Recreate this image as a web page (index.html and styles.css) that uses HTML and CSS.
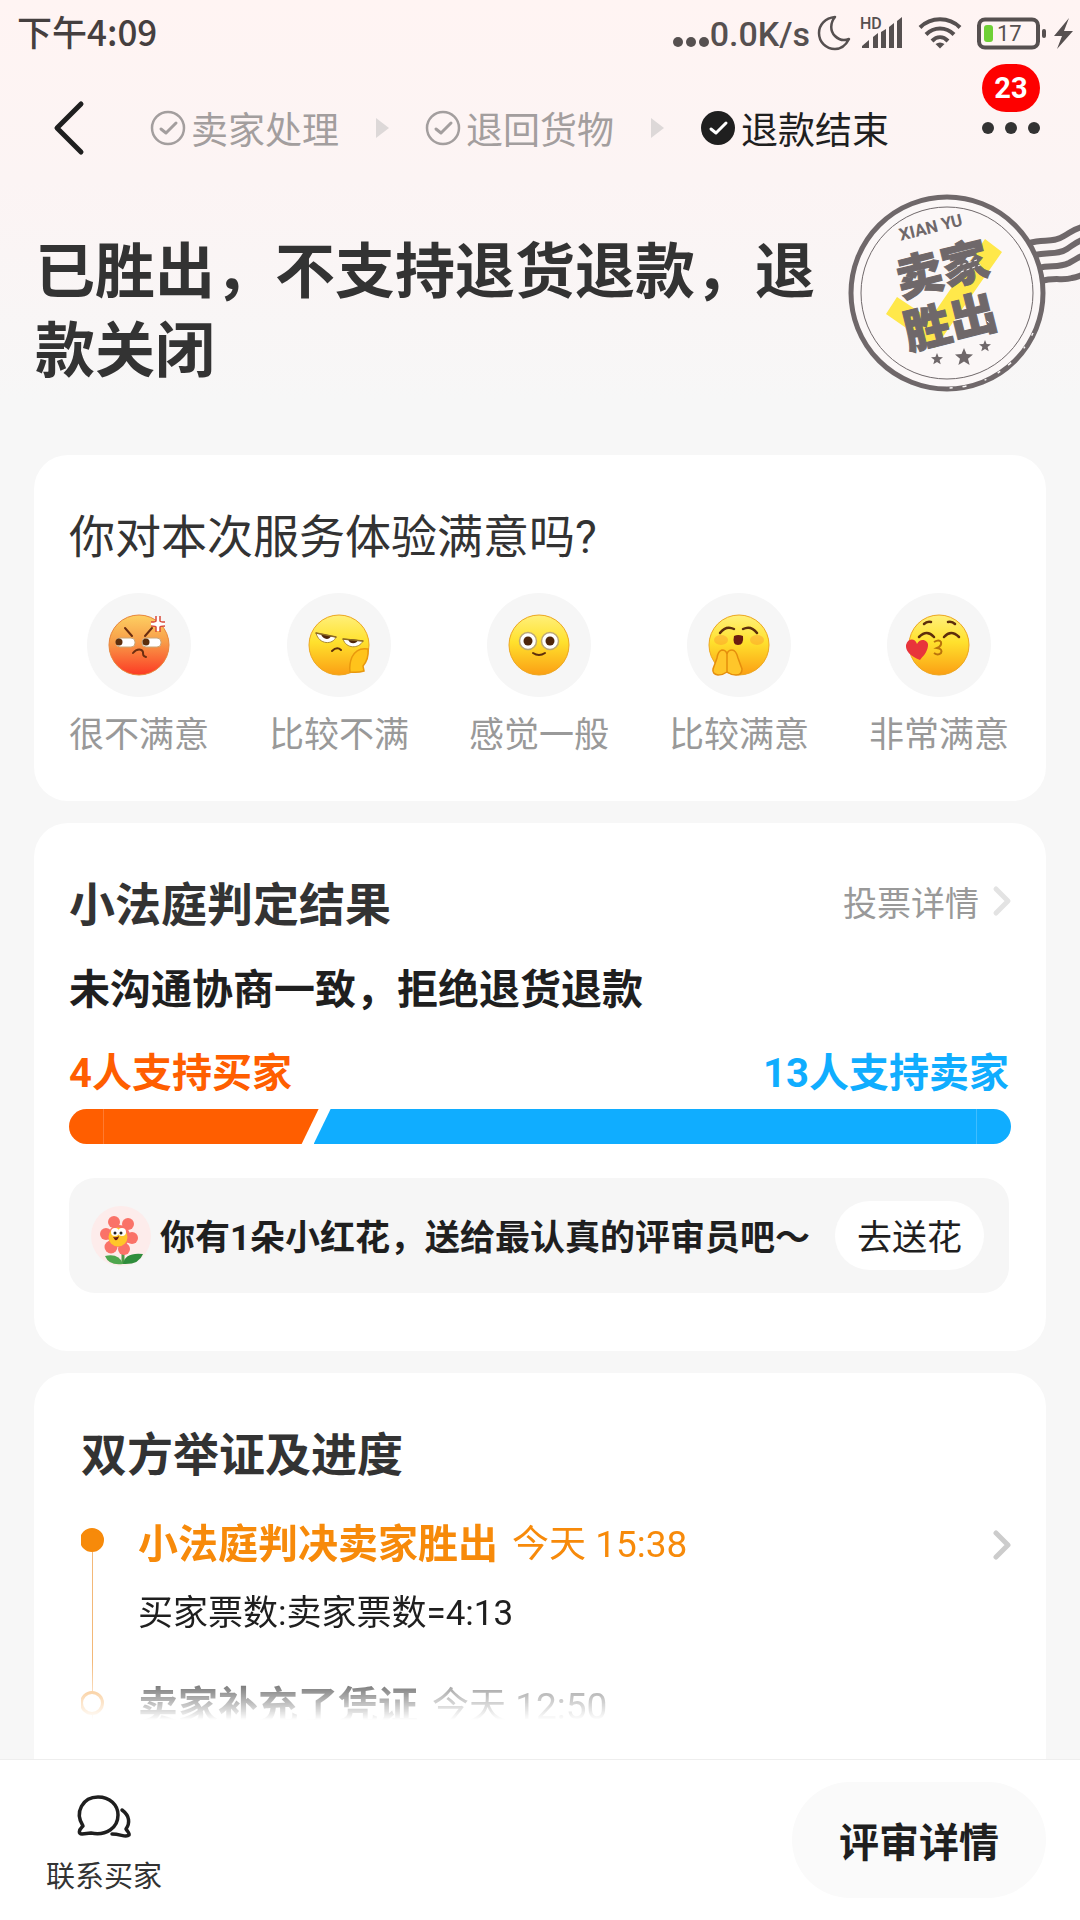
FILE: index.html
```html
<!DOCTYPE html>
<html lang="zh-CN">
<head>
  <meta charset="UTF-8" />
  <meta name="viewport" content="width=device-width, initial-scale=1.0" />
  <title>退款结束</title>
  <link rel="stylesheet" href="styles.css">
</head>
<body>
  <!-- 状态栏 -->
  <div class="status-bar">
    <span class="clock">下午4:09</span>
    <div class="status-icons">
      <svg width="36" height="36" viewBox="0 0 36 36" fill="#565050"><circle cx="5" cy="27" r="5"/><circle cx="18" cy="27" r="5"/><circle cx="31" cy="27" r="5"/></svg>
      <span class="speed">0.0K/s</span>
      <svg class="moon" width="34" height="36" viewBox="0 0 34 36" fill="none" stroke="#565050" stroke-width="2.5" stroke-linejoin="round"><path d="M18 2C8 3 2 10 2 18c0 9 7 16 16 16 6 0 11-4 14-10-5 2-10 1-14-3-5-5-5-13 0-19z"/></svg>
      <svg class="signal" width="44" height="36" viewBox="0 0 44 36">
        <text class="hd" x="0" y="14">HD</text>
        <g fill="#565050"><path d="M2 33v-2l7-6v8zM13 33V22l5-4v15zM21 33V17l5-3v19zM29 33V12l5-4v25zM37 33V6l5-4v31z"/></g>
      </svg>
      <svg class="wifi" width="42" height="34" viewBox="0 0 42 34" fill="none" stroke="#565050" stroke-width="4"><path d="M1 11.500C12 .6 30 .6 41 11.500M7 18.500c8-8 20-8 28 0M13 25c5-5 11-5 16 0"/><path d="M16.500 28q4.500-3 9 0L21 32.500z" fill="#565050" stroke="none"/></svg>
      <svg class="battery" width="97" height="34" viewBox="0 0 97 34">
        <rect x="2" y="3.500" width="59" height="28" rx="6" fill="none" stroke="#565050" stroke-width="4"/>
        <rect x="7" y="9" width="9" height="17" rx="3" fill="#6fd036"/>
        <rect x="65" y="13" width="4" height="9" rx="2" fill="#565050"/>
        <text class="level" x="20" y="25">17</text>
        <path d="M92 2L77 20h8l-5 13 16-18h-9z" fill="#565050"/>
      </svg>
    </div>
  </div>

  <!-- 顶部导航 -->
  <header class="nav">
    <button class="back" aria-label="返回">
      <svg width="32" height="56" viewBox="0 0 32 56" fill="none" stroke="#1f1f1f" stroke-width="5" stroke-linecap="round" stroke-linejoin="round"><path d="M28 4L4 28l24 24"/></svg>
    </button>
    <ol class="steps">
      <li class="step">
        <svg width="36" height="36" viewBox="0 0 36 36" fill="none" stroke="#a39e9e"><circle cx="18" cy="18" r="16" stroke-width="2.500"/><path d="M11 19l5 4 10-10" stroke-width="3" stroke-linecap="round" stroke-linejoin="round"/></svg>
        <span>卖家处理</span>
      </li>
      <li class="arrow"></li>
      <li class="step">
        <svg width="36" height="36" viewBox="0 0 36 36" fill="none" stroke="#a39e9e"><circle cx="18" cy="18" r="16" stroke-width="2.500"/><path d="M11 19l5 4 10-10" stroke-width="3" stroke-linecap="round" stroke-linejoin="round"/></svg>
        <span>退回货物</span>
      </li>
      <li class="arrow"></li>
      <li class="step current">
        <svg width="36" height="36" viewBox="0 0 36 36" fill="none"><circle cx="18" cy="18" r="17" fill="#1f1f1f"/><path d="M11 19l5 4 10-10" stroke="#fff" stroke-width="3" stroke-linecap="round" stroke-linejoin="round"/></svg>
        <span>退款结束</span>
      </li>
    </ol>
    <button class="more" aria-label="更多">
      <svg width="60" height="14" viewBox="0 0 60 14" fill="#333"><circle cx="7" cy="7" r="6"/><circle cx="30" cy="7" r="6"/><circle cx="53" cy="7" r="6"/></svg>
      <span class="badge">23</span>
    </button>
  </header>

  <!-- 结果标题 + 印章 -->
  <section class="hero">
    <h1>已胜出，不支持退货退款，退款关闭</h1>
    <svg class="stamp" width="235" height="208" viewBox="0 0 235 208">
      <g fill="none" stroke="#6f686a">
        <g stroke-width="6">
          <path d="M184 53c16-4 24 0 35-7 7-4 10-7 18-9"/>
          <path d="M189 65c16-3 24 0 33-6 6-4 8-6 15-9"/>
          <path d="M193 78c14-3 20 0 31-5 6-3 8-5 13-7"/>
          <path d="M196 91c14-4 22 0 31-3 5-1 7-2 10-3"/>
        </g>
        <circle class="stamp-bg" cx="102" cy="103" r="96" stroke-width="5"/>
        <circle cx="102" cy="103" r="86" stroke-width="1"/>
      </g>
      <path d="M52 107L41 124l49 34 67-96-17-13-55 80z" fill="#ffe84a"/>
      <g class="stamp-text">
        <text class="pinyin" x="87" y="43" transform="rotate(-14 87 43)">XIAN YU</text>
        <g transform="rotate(-14 102 103)">
          <text x="103" y="96">卖家</text>
          <text x="98" y="149">胜出</text>
        </g>
      </g>
      <g fill="#6f686a">
        <path d="M119 158l2.500 6 6.500.5-5 4.200 1.600 6.300-5.600-3.400-5.600 3.400 1.600-6.300-5-4.200 6.500-.5z"/>
        <path d="M92 163l1.600 4 4.400.3-3.400 2.800 1.100 4.200-3.700-2.300-3.700 2.300 1.100-4.200-3.400-2.800 4.400-.3z"/>
        <path d="M140 150l1.600 4 4.400.3-3.400 2.800 1.100 4.200-3.700-2.300-3.700 2.300 1.100-4.200-3.400-2.800 4.400-.3z"/>
      </g>
      <!-- 磨损痕迹 -->
      <g fill="none" stroke="#f8f5f5">
        <path d="M188 143c-14 29-44 54-84 55" stroke-width="1.500" stroke-dasharray="3 13 2 19 4 10"/>
        <path d="M112 76l20-6m-16 12l22-8m-6 50l14 10" stroke-width="1" stroke-dasharray="3 3"/>
      </g>
    </svg>
  </section>

  <main class="cards">
    <!-- 满意度 -->
    <section class="card">
      <h2 class="card-title light">你对本次服务体验满意吗?</h2>
      <div class="rates">
        <button class="rate">
          <span class="face">
            <svg width="62" height="62" viewBox="0 0 62 62">
              <defs><linearGradient id="red" x1="0" y1="0" x2="0" y2="1"><stop offset="0" stop-color="#fdd062"/><stop offset=".45" stop-color="#f89c48"/><stop offset="1" stop-color="#fc3a24"/></linearGradient></defs>
              <circle cx="31" cy="31" r="30" fill="url(#red)" stroke="#e8853a"/>
              <rect x="8" y="24" width="19" height="9" rx="4" fill="#fff" stroke="#c9a679"/>
              <rect x="34" y="24" width="19" height="9" rx="4" fill="#fff" stroke="#c9a679"/>
              <g fill="#5d2e0c"><circle cx="11" cy="28" r="3.500"/><circle cx="38" cy="28" r="3.500"/></g>
              <path d="M17 14l7 8M44 14l-7 8M25 39c4-5 9-4 10-1 0 3 0 4 3 5" fill="none" stroke="#6b2d10" stroke-width="2" stroke-linecap="round"/>
              <path d="M50 3v14M43 10h14" fill="none" stroke="#fff" stroke-width="4"/>
              <path d="M48 2v5q0 1-5 1M52 2v5q0 1 5 1M48 18v-5q0-1-5-1M52 18v-5q0-1 5-1" fill="none" stroke="#d9493a" stroke-width="1.500"/>
            </svg>
          </span>
          <span>很不满意</span>
        </button>
        <button class="rate">
          <span class="face">
            <svg width="62" height="62" viewBox="0 0 62 62">
              <defs><linearGradient id="yellow" x1="0" y1="0" x2="0" y2="1"><stop offset="0" stop-color="#fff07a"/><stop offset=".45" stop-color="#ffe12d"/><stop offset="1" stop-color="#fb9f14"/></linearGradient></defs>
              <circle cx="31" cy="31" r="30" fill="url(#yellow)" stroke="#eda61f"/>
              <path d="M8 19l20 4c-3 8-17 8-20-4zM35 25l20 2c-4 8-17 8-20-2z" fill="#fff" stroke="#ab8a32"/>
              <path d="M13 20l10 2c-2 5-9 3-10-2zM40 25l10 1c-2 5-9 4-10-1z" fill="#4f260a"/>
              <path d="M8 19l20 4M35 25l20 2" fill="none" stroke="#8d6a22" stroke-width="1.500" stroke-linecap="round"/>
              <path d="M24 37q5-5 9-1" fill="none" stroke="#5d2e0c" stroke-width="2" stroke-linecap="round"/>
              <path d="M60 35q-11-2-16 8-3 7-2 15 8 1 14-1l-1-5q6-7 5-17z" fill="#ffc31b" stroke="#e9980d" stroke-width="1.500"/>
            </svg>
          </span>
          <span>比较不满</span>
        </button>
        <button class="rate">
          <span class="face">
            <svg width="62" height="62" viewBox="0 0 62 62">
              <circle cx="31" cy="31" r="30" fill="url(#yellow)" stroke="#eda61f"/>
              <g fill="#fff" stroke="#bda873" stroke-width="1.500"><circle cx="20" cy="27" r="8.500"/><circle cx="42" cy="27" r="8.500"/></g>
              <g fill="#4f260a"><circle cx="20" cy="27" r="4.500"/><circle cx="42" cy="27" r="4.500"/></g>
              <path d="M25 39q6 4 12 0" fill="none" stroke="#5d2e0c" stroke-width="2" stroke-linecap="round"/>
            </svg>
          </span>
          <span>感觉一般</span>
        </button>
        <button class="rate">
          <span class="face">
            <svg width="62" height="62" viewBox="0 0 62 62">
              <circle cx="31" cy="31" r="30" fill="url(#yellow)" stroke="#eda61f"/>
              <g fill="#f9762f" opacity=".3"><ellipse cx="13" cy="26" rx="7" ry="5"/><ellipse cx="49" cy="26" rx="7" ry="5"/></g>
              <path d="M12 19q6-8 14-4M35 15q8-4 14 4" fill="none" stroke="#5d2e0c" stroke-width="2.500" stroke-linecap="round"/>
              <path d="M26 22q4-2 9 0 1 9-5 9t-4-9z" fill="#6b1d10"/>
              <path d="M19 40q-1-4-5-4-4 1-5 8L5 55q-1 5 5 6 5 0 9-3zM19 40q1-4 5-4 4 0 6 8l4 11q0 6-6 6-5 0-9-3z" fill="#ffc62a" stroke="#e58e0d" stroke-width="1.500"/>
            </svg>
          </span>
          <span>比较满意</span>
        </button>
        <button class="rate">
          <span class="face">
            <svg width="68" height="62" viewBox="-3 0 68 62">
              <circle cx="31" cy="31" r="30" fill="url(#yellow)" stroke="#eda61f"/>
              <path d="M11 23q8-8 15 0M36 23q7-8 15 0M16 10q3-3 7-2M40 8q4-1 7 2" fill="none" stroke="#5d2e0c" stroke-width="2.500" stroke-linecap="round"/>
              <path d="M26 28q5-3 7 0 1 4-4 6 6 1 4 5-3 3-7 0" fill="none" stroke="#b9730c" stroke-width="2"/>
              <path d="M12 46Q-3 40-2 31c2-7 9-7 11-1 3-7 12-4 11 2-1 7-5 10-8 14z" fill="#e8343b"/>
            </svg>
          </span>
          <span>非常满意</span>
        </button>
      </div>
    </section>

    <!-- 小法庭 -->
    <section class="card">
      <div class="card-head">
        <h2 class="card-title">小法庭判定结果</h2>
        <a class="detail-link" href="#votes">投票详情
          <svg width="18" height="30" viewBox="0 0 18 30" fill="none" stroke="#e3e3e3" stroke-width="5" stroke-linecap="round" stroke-linejoin="round"><path d="M3 3l12 12L3 27"/></svg>
        </a>
      </div>
      <p class="verdict">未沟通协商一致，拒绝退货退款</p>
      <div class="votes" id="votes">
        <span class="buyer">4人支持买家</span>
        <span class="seller">13人支持卖家</span>
      </div>
      <div class="vote-bar">
        <div class="bar-buyer" style="width: 26.5%"></div>
        <div class="bar-seller"></div>
      </div>
      <div class="flower">
        <svg width="60" height="60" viewBox="0 0 60 60">
          <circle cx="30" cy="30" r="30" fill="#fdeceb"/>
          <path d="M32 44v14" stroke="#4b9b45" stroke-width="3"/>
          <path d="M32 58q2-12 20-10-4 11-20 10z" fill="#2f8d3c"/>
          <path d="M32 58Q18 60 14 50q14-3 18 8z" fill="#4fa64e"/>
          <g fill="#fa7268"><circle cx="23" cy="16" r="6"/><circle cx="37" cy="18" r="6"/><circle cx="15" cy="28" r="6"/><circle cx="41" cy="32" r="6"/><circle cx="20" cy="41" r="6.500"/><circle cx="33" cy="43" r="6"/><circle cx="28" cy="30" r="11"/></g>
          <circle cx="27" cy="31" r="9.500" fill="#ffc629"/>
          <g fill="#fff"><circle cx="24" cy="26" r="4"/><circle cx="31" cy="26" r="4"/></g>
          <g fill="#222"><circle cx="24" cy="27" r="1.500"/><circle cx="30" cy="27" r="1.500"/></g>
          <path d="M22 31q4 1 6-1-1 5-4 4z" fill="#6b1d10"/>
        </svg>
        <p>你有1朵小红花，送给最认真的评审员吧～</p>
        <button>去送花</button>
      </div>
    </section>

    <!-- 举证及进度 -->
    <section class="card progress">
      <h2 class="card-title">双方举证及进度</h2>
      <ul class="timeline">
        <li class="event active">
          <div class="rail"><i class="dot"></i></div>
          <div class="event-body">
            <p class="event-title"><b>小法庭判决卖家胜出</b><time>今天 15:38</time></p>
            <p class="event-text">买家票数:卖家票数=4:13</p>
          </div>
          <svg class="more-arrow" width="18" height="30" viewBox="0 0 18 30" fill="none" stroke="#ccc" stroke-width="5" stroke-linecap="round" stroke-linejoin="round"><path d="M3 3l12 12L3 27"/></svg>
        </li>
        <li class="event">
          <div class="rail"><i class="dot"></i></div>
          <div class="event-body">
            <p class="event-title"><b>卖家补充了凭证</b><time>今天 12:50</time></p>
          </div>
        </li>
      </ul>
    </section>
  </main>

  <!-- 底部操作栏 -->
  <footer class="actions">
    <button class="contact">
      <svg width="56" height="46" viewBox="0 0 56 46" fill="none" stroke="#1f1f1f" stroke-width="3.500" stroke-linecap="round" stroke-linejoin="round"><path d="M7 32C-2 18 7 3 22 3c12 0 20 8 20 18 0 13-12 21-27 18l-9 1c-4 0-3-4 0-7z"/><path d="M46 16c8 6 8 13 4 19 2 3 4 5 3 6-3 3-8-1-17-1"/></svg>
      <span>联系买家</span>
    </button>
    <button class="review">评审详情</button>
  </footer>
</body>
</html>
```
FILE: styles.css
```css
* { margin: 0; padding: 0; box-sizing: border-box; }
body {
  min-height: 100vh;
  display: flex; flex-direction: column;
  background: #f7f7f7 linear-gradient(#fff4f3, #fcf4f4 180px, #f7f7f7 400px) no-repeat;
  font-family: Roboto, "Noto Sans CJK SC", sans-serif;
  font-size: 35px; color: #1f1f1f;
}
button { border: none; background: none; font: inherit; color: inherit; cursor: pointer; }
ol, ul { list-style: none; }
svg { display: block; flex: none; overflow: visible; }

/* 状态栏 */
.status-bar {
  height: 66px; padding: 0 6px 0 17px;
  display: flex; align-items: center; justify-content: space-between;
}
.clock { padding-bottom: 4px; font: 500 35px/50px "Noto Sans CJK SC", sans-serif; color: #453f3f; }
.status-icons { display: flex; align-items: center; color: #565050; }
.speed { margin: 0 7px 0 1px; padding-top: 2px; font-size: 34px; font-weight: 500; line-height: 50px; }
.moon { margin-right: 9px; }
.signal { margin-right: 15px; }
.hd { font-size: 16px; font-weight: 500; fill: #565050; }
.wifi { margin-right: 16px; }
.level { font-size: 22px; fill: #565050; }

/* 导航 */
.nav {
  height: 124px; padding: 0 39px 0 53px;
  display: flex; align-items: center;
}
.steps { margin-left: 65px; display: flex; align-items: center; }
.step { display: flex; align-items: center; gap: 5px; font-size: 37px; color: #a39e9e; }
.step span { padding-top: 8px; line-height: 54px; }
.step.current { color: #1f1f1f; }
.arrow {
  margin: 0 36px 0 37px;
  border-left: 13px solid #ddd8d8;
  border-top: 10px solid transparent; border-bottom: 10px solid transparent;
}
.more { position: relative; margin-left: auto; }
.badge {
  position: absolute; left: 1px; bottom: 23px;
  width: 58px; height: 48px; border-radius: 24px;
  background: #fe0000; color: #fff;
  font-size: 29px; font-weight: 700; line-height: 48px; text-align: center;
}

/* 标题 */
.hero { padding: 0 0 57px 35px; display: flex; align-items: flex-start; justify-content: space-between; }
.hero h1 { flex: 1; padding-top: 43px; font-size: 60px; line-height: 79px; font-weight: 700; color: #333; }
.stamp-bg { fill: #fbf7f7; }
.stamp-text { fill: #6f686a; stroke: #6f686a; font-weight: 900; font-size: 47px; text-anchor: middle; }
.stamp-text .pinyin { font-size: 17px; font-weight: 700; stroke: none; }

/* 卡片 */
.cards { flex: 1; padding: 0 34px; display: flex; flex-direction: column; gap: 22px; }
.card { padding: 50px 35px 41px; border-radius: 34px; background: #fff; }
.card-title { font-size: 46px; line-height: 64px; font-weight: 700; color: #333; }
.card-title.light { font-weight: 400; }
.card-head { display: flex; align-items: center; justify-content: space-between; }

.rates { margin: 24px 2px 0 0; display: flex; justify-content: space-between; }
.rate { display: flex; flex-direction: column; align-items: center; gap: 14px; line-height: 49px; color: #999; }
.face {
  width: 104px; height: 104px; border-radius: 50%; background: #f6f6f6;
  display: flex; align-items: center; justify-content: center;
}

.detail-link { padding-bottom: 8px; display: flex; align-items: center; gap: 14px; font-size: 34px; color: #999; text-decoration: none; }
.verdict { margin-top: 25px; font-size: 41px; line-height: 56px; font-weight: 700; }
.votes { margin: 28px 2px 0 0; display: flex; justify-content: space-between; font-size: 40px; line-height: 56px; font-weight: 700; }
.buyer { color: #ff5e00; }
.seller { color: #10adff; }
.vote-bar { margin-top: 7px; height: 35px; display: flex; border-radius: 18px; overflow: hidden; }
.bar-buyer {
  background: linear-gradient(#ff7a30, #ff7a30) 34px 0 / 1px 100% no-repeat #ff5e00;
  clip-path: polygon(0 0, 100% 0, calc(100% - 17px) 100%, 0 100%);
}
.bar-seller {
  flex: 1; margin-left: -5px;
  background: linear-gradient(#3fbdff, #3fbdff) right 34px top 0 / 1px 100% no-repeat #10adff;
  clip-path: polygon(17px 0, 100% 0, 100% 100%, 0 100%);
}

.flower {
  margin: 34px 2px 17px 0; padding: 23px 25px 23px 22px;
  display: flex; align-items: center;
  border-radius: 26px; background: #f6f6f6;
}
.flower p { flex: 1; margin-left: 9px; padding-top: 6px; line-height: 50px; font-weight: 700; white-space: nowrap; }
.flower button { height: 69px; padding: 6px 22px 0; border-radius: 35px; background: #fff; line-height: 50px; white-space: nowrap; }

/* 进度 */
.card.progress { flex: 1; padding-left: 47px; border-radius: 34px 34px 0 0; padding-bottom: 20px; }
.timeline {
  margin-top: 29px;
  -webkit-mask-image: linear-gradient(#000 145px, transparent 204px);
  mask-image: linear-gradient(#000 145px, transparent 204px);
}
.event { display: flex; align-items: flex-start; }
.rail { align-self: stretch; width: 22px; margin-right: 35px; display: flex; flex-direction: column; align-items: center; }
.rail::after { content: ""; flex: 1; width: 1px; background: #f3b878; }
.active .rail { padding-top: 12px; margin-bottom: -13px; }
.dot { width: 24px; height: 24px; border: 3px solid #f5a54a; border-radius: 50%; margin-top: 13px; }
.active .dot { margin-top: 0; background: #f78a0a; border-color: #f78a0a; }
.event-body { flex: 1; }
.active .event-body { padding-bottom: 39px; }
.event-title { display: flex; align-items: center; gap: 14px; line-height: 58px; }
.event-title b { font-size: 40px; font-weight: 700; }
.event-title time { font-size: 37px; color: #666; }
.active .event-title, .active .event-title time { color: #f78a0a; }
.event-text { margin-top: 15px; line-height: 50px; }
.more-arrow { margin-top: 14px; }

/* 底部 */
.actions {
  padding: 22px 34px; border-top: 1px solid #eee; background: #fff;
  display: flex; align-items: center; justify-content: space-between;
}
.contact { margin-left: 12px; padding-top: 10px; display: flex; flex-direction: column; align-items: center; gap: 17px; font-size: 29px; line-height: 40px; color: #333; }
.review { padding: 33px 47px 25px; border-radius: 58px; background: #fafafa; font-size: 40px; line-height: 58px; font-weight: 700; }
```
